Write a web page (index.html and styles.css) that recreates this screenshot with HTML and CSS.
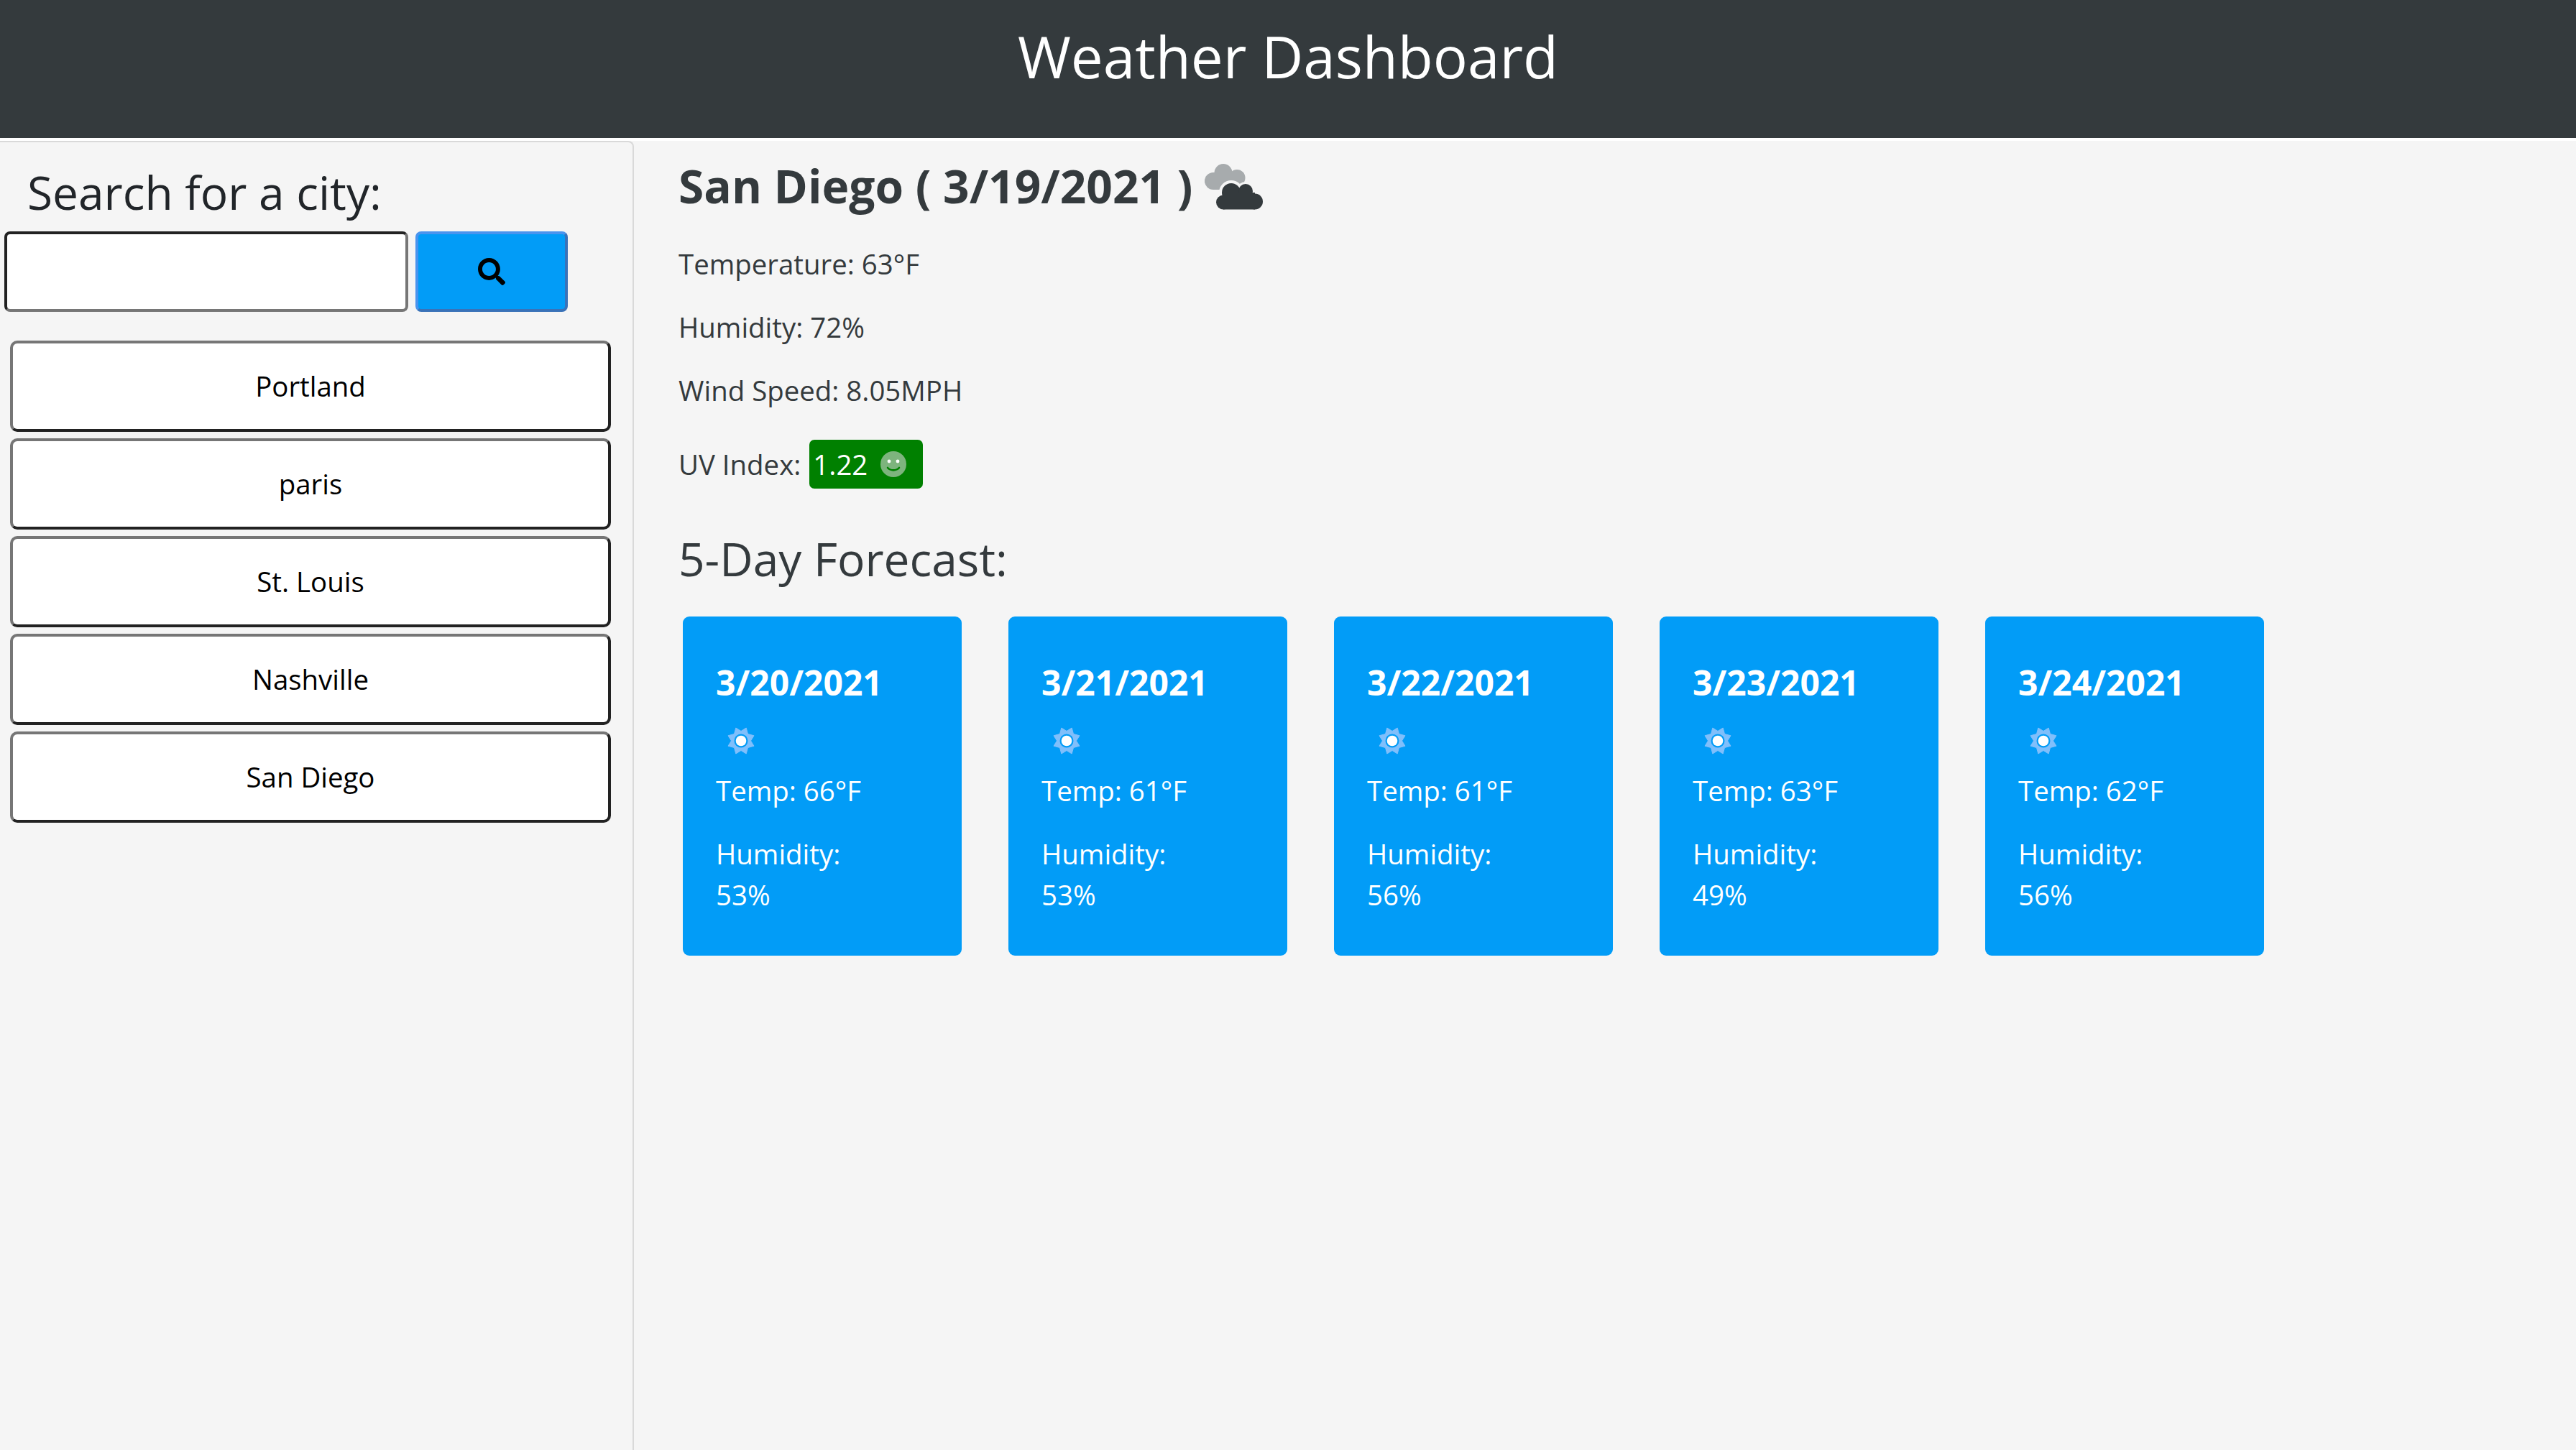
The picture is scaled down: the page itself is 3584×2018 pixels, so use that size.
FILE: index.html
```html
<!DOCTYPE html>
<html lang="en">
<head>
  <meta charset="UTF-8">
  <title>Weather Dashboard</title>
  <link rel="stylesheet" href="styles.css">
</head>
<body>
  <svg class="defs" width="0" height="0">
    <symbol id="sun" viewBox="-20 -20 40 40">
      <polygon fill="#80bffb" stroke="#80bffb" stroke-width="1" stroke-linejoin="round" points="-7.2,-18 0,-13.5 7.200,-18 9.500,-9.500 18,-7.200 13.500,0 18,7.200 9.500,9.500 7.200,18 0,13.500 -7.200,18 -9.500,9.500 -18,7.200 -13.500,0 -18,-7.200 -9.500,-9.500"/>
      <circle r="9.5" fill="#029cf7"/>
      <circle r="7.3" fill="#fff"/>
    </symbol>
  </svg>

  <header class="topbar">
    <h1>Weather Dashboard</h1>
  </header>

  <main class="layout">
    <aside class="sidebar">
      <h3>Search for a city:</h3>
      <form class="search">
        <input type="text" class="search-input">
        <button type="button" class="search-btn">
          <svg viewBox="0 0 512 512" width="38" height="38"><path d="M505 442.7L405.3 343c-4.5-4.5-10.6-7-17-7H372c27.6-35.3 44-79.7 44-128C416 93.1 322.9 0 208 0S0 93.1 0 208s93.1 208 208 208c48.3 0 92.7-16.4 128-44v16.3c0 6.4 2.5 12.5 7 17l99.7 99.7c9.4 9.4 24.6 9.4 33.9 0l28.3-28.3c9.4-9.4 9.4-24.6.1-34zM208 336c-70.7 0-128-57.2-128-128 0-70.7 57.2-128 128-128 70.7 0 128 57.2 128 128 0 70.7-57.2 128-128 128z"/></svg>
        </button>
      </form>
      <div class="cities">
        <button type="button" class="city">Portland</button>
        <button type="button" class="city">paris</button>
        <button type="button" class="city">St. Louis</button>
        <button type="button" class="city">Nashville</button>
        <button type="button" class="city">San Diego</button>
      </div>
    </aside>

    <section class="content">
      <h2 class="current-title">San Diego ( 3/19/2021 )
        <svg class="cloud-icon" viewBox="16 17 81 65" width="81" height="65">
          <g fill="#a7abad">
            <circle cx="28" cy="42" r="12"/>
            <circle cx="42" cy="30.500" r="12.500"/>
            <circle cx="61" cy="37.500" r="11.500"/>
            <rect x="28" y="30" width="34" height="24"/>
          </g>
          <g fill="#f5f5f5">
            <circle cx="53" cy="58" r="17"/>
            <circle cx="73" cy="56" r="13"/>
          </g>
          <g fill="#343a3d">
            <circle cx="53" cy="58" r="13"/>
            <circle cx="73" cy="56" r="10"/>
            <circle cx="42" cy="71.500" r="10"/>
            <circle cx="86" cy="70.500" r="11"/>
            <rect x="42" y="58" width="44" height="23.500"/>
          </g>
        </svg>
      </h2>
      <p>Temperature: 63°F</p>
      <p>Humidity: 72%</p>
      <p>Wind Speed: 8.05MPH</p>
      <p class="uv">UV Index:
        <span class="uv-badge">1.22
          <svg viewBox="0 0 36 36" width="36" height="36">
            <circle cx="18" cy="18" r="18" fill="#7db47d"/>
            <circle cx="12" cy="14" r="2.4" fill="#fff"/>
            <circle cx="24" cy="14" r="2.4" fill="#fff"/>
            <path d="M10 23c4 4.500 12 4.500 16 0" fill="none" stroke="#008000" stroke-width="2.600" stroke-linecap="round"/>
          </svg>
        </span>
      </p>
      <h3 class="forecast-title">5-Day Forecast:</h3>
      <div class="forecast">
        <div class="card">
          <h5>3/20/2021</h5>
          <svg class="sun"><use href="#sun"/></svg>
          <p>Temp: 66°F</p>
          <p>Humidity: 53%</p>
        </div>
        <div class="card">
          <h5>3/21/2021</h5>
          <svg class="sun"><use href="#sun"/></svg>
          <p>Temp: 61°F</p>
          <p>Humidity: 53%</p>
        </div>
        <div class="card">
          <h5>3/22/2021</h5>
          <svg class="sun"><use href="#sun"/></svg>
          <p>Temp: 61°F</p>
          <p>Humidity: 56%</p>
        </div>
        <div class="card">
          <h5>3/23/2021</h5>
          <svg class="sun"><use href="#sun"/></svg>
          <p>Temp: 63°F</p>
          <p>Humidity: 49%</p>
        </div>
        <div class="card">
          <h5>3/24/2021</h5>
          <svg class="sun"><use href="#sun"/></svg>
          <p>Temp: 62°F</p>
          <p>Humidity: 56%</p>
        </div>
      </div>
    </section>
  </main>
</body>
</html>
```

FILE: styles.css
```css
html, body {
  height: 100%;
}
body {
  margin: 0;
  background: #fff;
  font-family: "Open Sans", sans-serif;
  font-size: 38.4px;
  line-height: 1.5;
  color: #343a3d;
  display: flex;
  flex-direction: column;
  overflow: hidden;
}
.defs { position: absolute; }

.topbar {
  height: 192px;
  flex: none;
  background: #343a3d;
  color: #fff;
  text-align: center;
}
.topbar h1 {
  margin: 0;
  padding-top: 30px;
  font-size: 80px;
  font-weight: 400;
  line-height: 1.2;
}

.layout {
  flex: 1;
  display: flex;
  margin-top: 4px;
  background: #f5f5f5;
}
.sidebar {
  width: 882px;
  flex: none;
  box-sizing: border-box;
  border-top: 2px solid #d9d9d9;
  border-right: 2px solid #d9d9d9;
  border-top-right-radius: 8px;
}
.sidebar h3 {
  margin: 32px 0 0 38px;
  font-size: 64px;
  font-weight: 400;
  line-height: 1.2;
  color: #212529;
}
.search {
  display: flex;
  gap: 10px;
  margin: 15px 0 0 6px;
}
.search-input {
  width: 562px;
  height: 112px;
  box-sizing: border-box;
  border: 4px solid;
  border-color: #222 #767676 #767676 #222;
  border-radius: 8px;
  background: #fff;
}
.search-btn {
  width: 212px;
  height: 112px;
  box-sizing: border-box;
  border: 4px solid;
  border-color: #4a94ee #3a72b8 #3a72b8 #4a94ee;
  border-radius: 8px;
  background: #029cf7;
  padding: 0;
  display: flex;
  align-items: center;
  justify-content: center;
}
.cities {
  display: flex;
  flex-direction: column;
  gap: 9px;
  margin: 40px 0 0 14px;
  width: 836px;
}
.city {
  height: 127px;
  box-sizing: border-box;
  border: 4px solid;
  border-color: #767676 #222 #222 #767676;
  border-radius: 10px;
  background: #fff;
  color: #000;
  font: 38.4px "Open Sans", sans-serif;
}

.content {
  flex: 1;
  padding: 25px 0 0 62px;
}
.content p {
  margin: 0 0 30.4px;
}
.current-title {
  margin: 0 0 41px;
  font-size: 64px;
  font-weight: 700;
  line-height: 1.2;
  display: flex;
  align-items: flex-start;
  gap: 17px;
}
.cloud-icon {
  margin-top: 6px;
}
.content .uv {
  display: flex;
  align-items: center;
  gap: 12px;
  margin-top: 40px;
}
.uv-badge {
  display: flex;
  align-items: center;
  gap: 18px;
  height: 68px;
  padding: 0 23px 0 5px;
  border-radius: 7px;
  background: #008000;
  color: #fff;
}
.forecast-title {
  margin: 60px 0 41px;
  font-size: 64px;
  font-weight: 400;
  line-height: 1.2;
}
.forecast {
  display: flex;
  gap: 65px;
  margin-left: 6px;
}
.card {
  width: 388px;
  height: 472px;
  box-sizing: border-box;
  padding: 63px 100px 0 46px;
  border-radius: 9px;
  background: #029cf7;
  color: #fff;
}
.card h5 {
  margin: 0;
  font-size: 48px;
  font-weight: 700;
  line-height: 1.2;
}
.card .sun {
  display: block;
  width: 40px;
  height: 40px;
  margin: 32px 0 21px 15px;
}
.card p {
  margin: 0 0 30.4px;
}
```
